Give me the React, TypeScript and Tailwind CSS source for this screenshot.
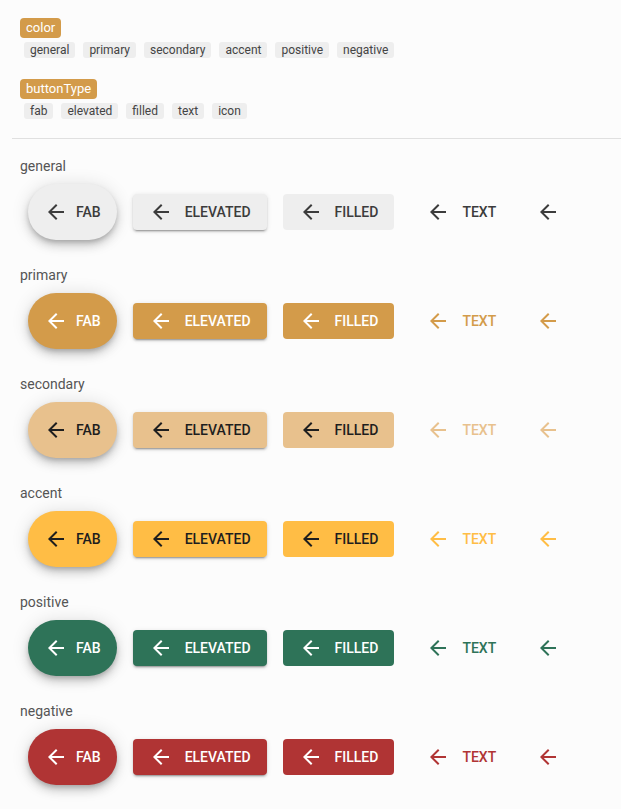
import React from 'react';

type Tone = {
  name: string;
  bg: string;
  fg: string;
  plain: string;
};

// one entry per colour row; plain = colour of the text / icon buttons
const TONES: Tone[] = [
  { name: 'general', bg: 'bg-[#eeeeee]', fg: 'text-[#3c3c3c]', plain: 'text-[#3c3c3c]' },
  { name: 'primary', bg: 'bg-[#d39b4a]', fg: 'text-white', plain: 'text-[#d39b4a]' },
  { name: 'secondary', bg: 'bg-[#e8c18d]', fg: 'text-[#1e1e1e]', plain: 'text-[#e8c18d]' },
  { name: 'accent', bg: 'bg-[#ffbd45]', fg: 'text-[#1e1e1e]', plain: 'text-[#ffbd45]' },
  { name: 'positive', bg: 'bg-[#2e7358]', fg: 'text-white', plain: 'text-[#2e7358]' },
  { name: 'negative', bg: 'bg-[#b03434]', fg: 'text-white', plain: 'text-[#b03434]' },
];

const BUTTON_TYPES = ['fab', 'elevated', 'filled', 'text', 'icon'];

const ArrowBack = () => (
  <svg width="24" height="24" viewBox="0 0 24 24" fill="currentColor" className="shrink-0">
    <path d="M20 11H7.83l5.59-5.59L12 4l-8 8 8 8 1.41-1.41L7.83 13H20v-2z" />
  </svg>
);

const Badge = ({ label }: { label: string }) => (
  <div className="flex">
    <span className="rounded-[4px] bg-[#d39b4a] px-[6px] text-[13px] leading-5 text-white">
      {label}
    </span>
  </div>
);

const Chips = ({ items }: { items: string[] }) => (
  <div className="mt-1 flex flex-wrap gap-2 pl-1">
    {items.map(item => (
      <span key={item} className="rounded-[3px] bg-[#eeeeee] px-[6px] text-[12px] leading-4 text-[#444]">
        {item}
      </span>
    ))}
  </div>
);

const ButtonRow = ({ tone }: { tone: Tone }) => {
  const label = 'text-[14px] font-medium uppercase leading-5';
  return (
    <div className="flex h-14 items-center gap-4 pl-2">
      <button className={`flex h-14 items-center gap-2 rounded-full px-4 shadow-[0_3px_5px_-1px_rgba(0,0,0,0.2),0_6px_10px_0_rgba(0,0,0,0.14),0_1px_18px_0_rgba(0,0,0,0.12)] ${tone.bg} ${tone.fg}`}>
        <ArrowBack />
        <span className={label}>Fab</span>
      </button>
      <button className={`flex h-9 items-center gap-3 rounded-[4px] px-4 shadow-[0_3px_1px_-2px_rgba(0,0,0,0.2),0_2px_2px_0_rgba(0,0,0,0.14),0_1px_5px_0_rgba(0,0,0,0.12)] ${tone.bg} ${tone.fg}`}>
        <ArrowBack />
        <span className={label}>Elevated</span>
      </button>
      <button className={`flex h-9 items-center gap-3 rounded-[4px] px-4 ${tone.bg} ${tone.fg}`}>
        <ArrowBack />
        <span className={label}>Filled</span>
      </button>
      <button className={`flex h-9 items-center gap-3 rounded-[4px] px-4 ${tone.plain}`}>
        <ArrowBack />
        <span className={label}>Text</span>
      </button>
      <button className={`flex h-10 w-10 items-center justify-center rounded-full ${tone.plain}`}>
        <ArrowBack />
      </button>
    </div>
  );
};

export default function App() {
  return (
    <div className="min-h-[809px] bg-[#fcfcfc] pb-6 font-['Roboto',sans-serif]">
      <div className="px-5 pt-[18px]">
        <Badge label="color" />
        <Chips items={TONES.map(t => t.name)} />
        <div className="mt-[21px]">
          <Badge label="buttonType" />
          <Chips items={BUTTON_TYPES} />
        </div>
      </div>

      <div className="ml-3 mt-[19px] border-t border-[#e0e0e0]" />

      <div className="flex flex-col gap-[25px] px-5 pt-[17px]">
        {TONES.map(tone => (
          <div key={tone.name}>
            <div className="text-[14px] leading-5 text-[#555]">{tone.name}</div>
            <div className="mt-2">
              <ButtonRow tone={tone} />
            </div>
          </div>
        ))}
      </div>
    </div>
  );
}
